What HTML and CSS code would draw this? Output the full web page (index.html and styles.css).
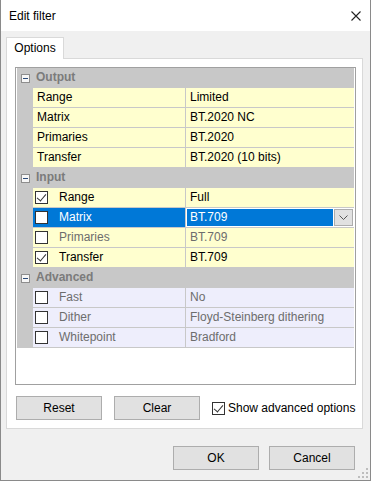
FILE: index.html
```html
<!DOCTYPE html>
<html lang="en">
<head>
  <meta charset="UTF-8">
  <title>Edit filter</title>
  <link rel="stylesheet" href="styles.css">
</head>
<body>

  <div class="window">
    <div class="titlebar">
      <span class="title">Edit filter</span>
      <svg class="close" width="10" height="10" viewBox="0 0 10 10">
        <path d="M0.5 0.5 L9.5 9.5 M9.5 0.5 L0.5 9.5" stroke="#222" stroke-width="1.1" fill="none"/>
      </svg>
    </div>

    <div class="tabs">
      <div class="tab">Options</div>
    </div>

    <div class="panel">
      <!-- property grid -->
      <div class="grid">
        <div class="row cat">
          <div class="gutter"><span class="minus"></span></div>
          <div class="cat-label">Output</div>
        </div>
        <div class="row yellow">
          <div class="gutter"></div>
          <div class="name">Range</div>
          <div class="value">Limited</div>
        </div>
        <div class="row yellow">
          <div class="gutter"></div>
          <div class="name">Matrix</div>
          <div class="value">BT.2020 NC</div>
        </div>
        <div class="row yellow">
          <div class="gutter"></div>
          <div class="name">Primaries</div>
          <div class="value">BT.2020</div>
        </div>
        <div class="row yellow">
          <div class="gutter"></div>
          <div class="name">Transfer</div>
          <div class="value">BT.2020 (10 bits)</div>
        </div>

        <div class="row cat">
          <div class="gutter"><span class="minus"></span></div>
          <div class="cat-label">Input</div>
        </div>
        <div class="row yellow">
          <div class="gutter"></div>
          <div class="name check"><span class="box checked"></span>Range</div>
          <div class="value">Full</div>
        </div>
        <div class="row yellow selected">
          <div class="gutter"></div>
          <div class="name check"><span class="box"></span>Matrix</div>
          <div class="value edit">
            <div class="sel">BT.709</div>
            <div class="drop">
              <svg width="9" height="5" viewBox="0 0 9 5"><path d="M0.5 0.5 L4.5 4.5 L8.5 0.5" stroke="#555" fill="none"/></svg>
            </div>
          </div>
        </div>
        <div class="row yellow off">
          <div class="gutter"></div>
          <div class="name check"><span class="box"></span>Primaries</div>
          <div class="value">BT.709</div>
        </div>
        <div class="row yellow">
          <div class="gutter"></div>
          <div class="name check"><span class="box checked"></span>Transfer</div>
          <div class="value">BT.709</div>
        </div>

        <div class="row cat">
          <div class="gutter"><span class="minus"></span></div>
          <div class="cat-label">Advanced</div>
        </div>
        <div class="row lilac off">
          <div class="gutter"></div>
          <div class="name check"><span class="box"></span>Fast</div>
          <div class="value">No</div>
        </div>
        <div class="row lilac off">
          <div class="gutter"></div>
          <div class="name check"><span class="box"></span>Dither</div>
          <div class="value">Floyd-Steinberg dithering</div>
        </div>
        <div class="row lilac off">
          <div class="gutter"></div>
          <div class="name check"><span class="box"></span>Whitepoint</div>
          <div class="value">Bradford</div>
        </div>
      </div>

      <div class="actions">
        <button class="btn">Reset</button>
        <button class="btn">Clear</button>
        <label class="show-adv"><span class="box checked"></span>Show advanced options</label>
      </div>
    </div>

    <div class="footer">
      <button class="btn">OK</button>
      <button class="btn">Cancel</button>
    </div>

    <svg class="grip" width="10" height="10" viewBox="0 0 10 10">
      <rect x="8" y="0" width="2" height="2" fill="#bdbdbd"/>
      <rect x="4" y="4" width="2" height="2" fill="#bdbdbd"/>
      <rect x="8" y="4" width="2" height="2" fill="#bdbdbd"/>
      <rect x="0" y="8" width="2" height="2" fill="#bdbdbd"/>
      <rect x="4" y="8" width="2" height="2" fill="#bdbdbd"/>
      <rect x="8" y="8" width="2" height="2" fill="#bdbdbd"/>
    </svg>
  </div>

</body>
</html>
```

FILE: styles.css
```css
body {
  margin: 0;
  font-family: 'Liberation Sans', Arial, sans-serif;
  font-size: 12px;
  color: #000;
  background: #fff;
}

.window {
  position: relative;
  width: 371px;
  height: 481px;
  box-sizing: border-box;
  border: 1px solid #8a8a8a;
  border-top: none;
  background: #f0f0f0;
}

.titlebar {
  height: 31px;
  background: #fff;
  display: flex;
  align-items: center;
  justify-content: space-between;
  padding: 0 9px 0 8px;
}

.close {
  margin-top: 1px;
}

.tabs {
  padding: 6px 0 0 5px;
}

.tab {
  display: inline-block;
  position: relative;
  z-index: 1;
  width: 56px;
  height: 21px;
  line-height: 20px;
  text-align: center;
  background: #fff;
  border: 1px solid #d9d9d9;
  border-bottom: none;
  margin-bottom: -1px;
}

.panel {
  margin-left: 5px;
  width: 357px;
  height: 371px;
  box-sizing: border-box;
  border: 1px solid #d9d9d9;
  background: #fff;
  padding: 8px 0 0 8px;
}

.grid {
  width: 341px;
  height: 318px;
  box-sizing: border-box;
  border: 1px solid #a0a0a0;
  padding: 0 1px;
}

.row {
  display: flex;
  height: 20px;
  box-sizing: border-box;
  border-bottom: 1px solid #c8c8c8;
  line-height: 19px;
}

.gutter {
  width: 16px;
  flex: none;
  background: #c8c8c8;
  position: relative;
}

.name {
  width: 148px;
  flex: none;
  padding-left: 4px;
  border-right: 1px solid #c8c8c8;
  white-space: nowrap;
}

.value {
  flex: 1;
  padding-left: 4px;
  white-space: nowrap;
}

.yellow .name, .yellow .value {
  background: #ffffcf;
}

.lilac .name, .lilac .value {
  background: #eeeefc;
}

.off .name, .off .value {
  color: #6d6d6d;
}

.cat {
  background: #c8c8c8;
}

.cat-label {
  font-weight: bold;
  color: #7b7b7b;
  padding-left: 3px;
}

.minus {
  position: absolute;
  left: 4px;
  top: 6px;
  width: 7px;
  height: 7px;
  border: 1px solid #8e8e8e;
  background: #f7f7f7;
}

.minus::after {
  content: "";
  position: absolute;
  left: 1px;
  top: 3px;
  width: 5px;
  height: 1px;
  background: #2b4a78;
}

.name.check {
  display: flex;
  align-items: center;
  padding-left: 2px;
  width: 150px;
}

.box {
  display: inline-block;
  position: relative;
  width: 11px;
  height: 11px;
  border: 1px solid #333;
  background: #fff;
  margin-right: 11px;
  flex: none;
}

.box.checked::after {
  content: "";
  position: absolute;
  left: 3px;
  top: 0px;
  width: 4px;
  height: 8px;
  border: solid #333;
  border-width: 0 1px 1px 0;
  transform: rotate(40deg);
}

.selected .name {
  background: #0078d7;
  color: #fff;
}

.value.edit {
  display: flex;
  padding: 1px 1px 1px 1px;
  background: #fff;
}

.sel {
  flex: 1;
  background: #0078d7;
  color: #fff;
  padding-left: 3px;
  line-height: 17px;
}

.drop {
  width: 17px;
  margin-left: 1px;
  border: 1px solid #adadad;
  background: #e1e1e1;
  display: flex;
  align-items: center;
  justify-content: center;
}

.actions {
  display: flex;
  align-items: center;
  margin-top: 11px;
  padding-left: 1px;
}

.btn {
  width: 86px;
  height: 24px;
  box-sizing: border-box;
  border: 1px solid #adadad;
  background: #e1e1e1;
  font-family: inherit;
  font-size: 12px;
  color: #000;
  padding: 0;
  margin-right: 12px;
}

.show-adv {
  display: flex;
  align-items: center;
}

.show-adv .box {
  margin-right: 3px;
}

.footer {
  display: flex;
  justify-content: flex-end;
  margin-top: 17px;
  padding-right: 15px;
}

.footer .btn {
  margin-right: 0;
  margin-left: 10px;
}

.grip {
  position: absolute;
  right: 2px;
  bottom: 2px;
}
```
